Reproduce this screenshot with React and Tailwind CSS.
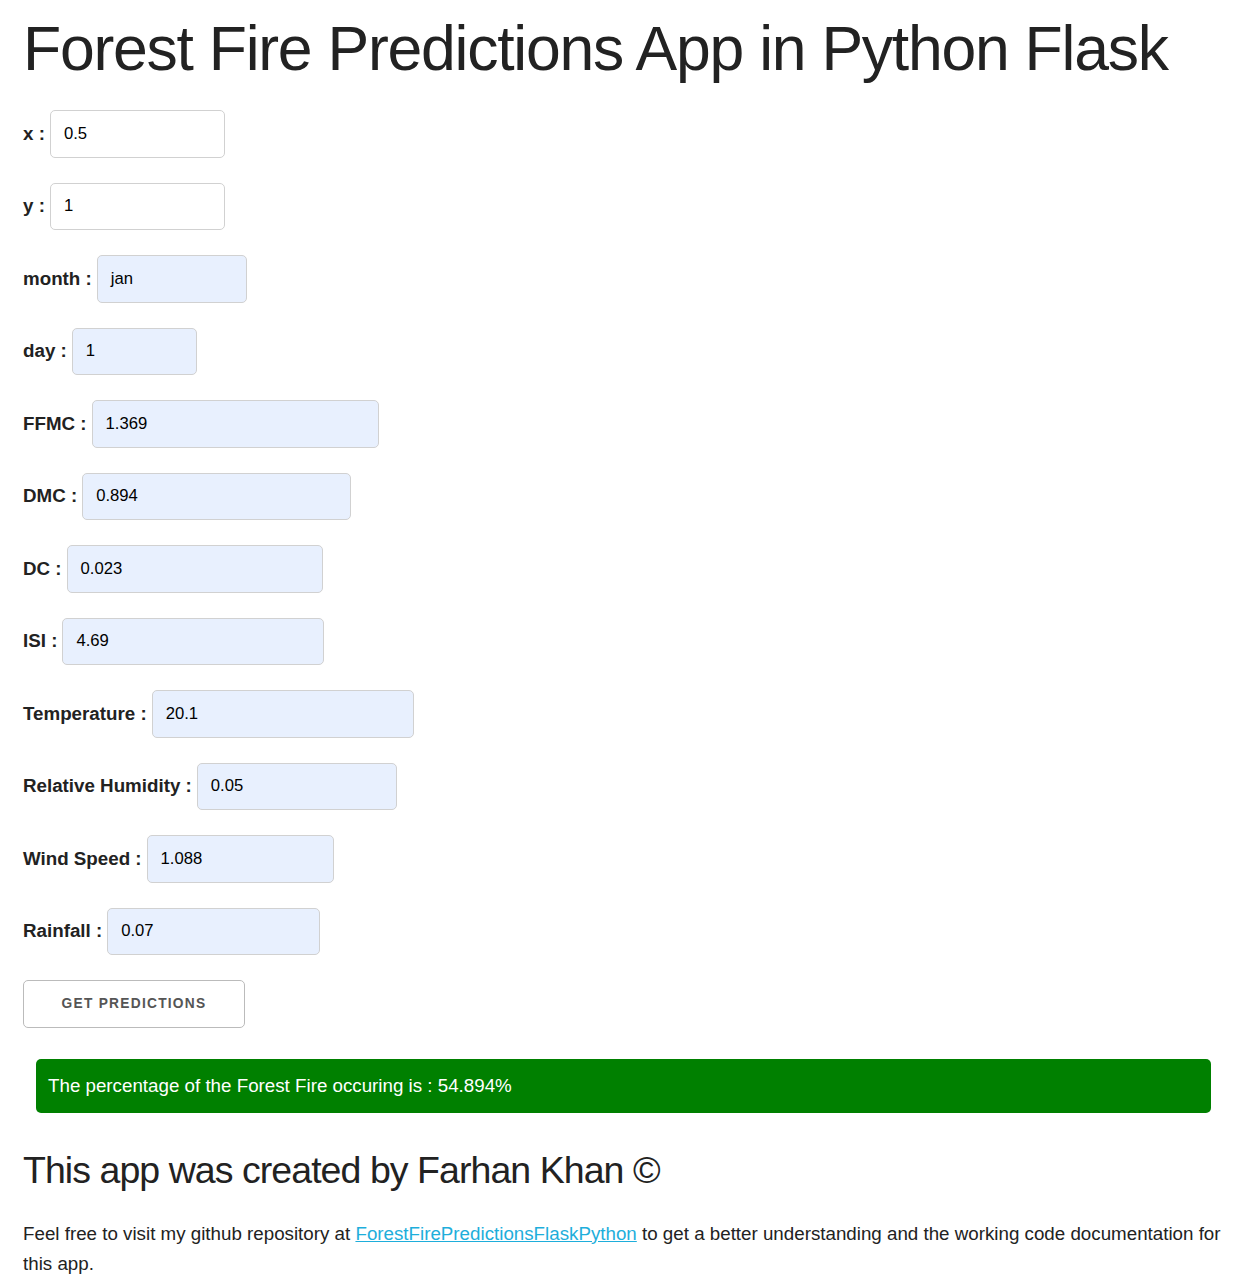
export default function App() {
  const rows = [
    { label: "x", value: "0.5", w: "w-[175px]", auto: false },
    { label: "y", value: "1", w: "w-[175px]", auto: false },
    { label: "month", value: "jan", w: "w-[150px]", auto: true },
    { label: "day", value: "1", w: "w-[125px]", auto: true },
    { label: "FFMC", value: "1.369", w: "w-[287px]", auto: true },
    { label: "DMC", value: "0.894", w: "w-[269px]", auto: true },
    { label: "DC", value: "0.023", w: "w-[256px]", auto: true },
    { label: "ISI", value: "4.69", w: "w-[262px]", auto: true },
    { label: "Temperature", value: "20.1", w: "w-[262px]", auto: true },
    { label: "Relative Humidity", value: "0.05", w: "w-[200px]", auto: true },
    { label: "Wind Speed", value: "1.088", w: "w-[187px]", auto: true },
    { label: "Rainfall", value: "0.07", w: "w-[213px]", auto: true },
  ];
  return (
    <div className="min-h-[1288px] bg-white text-[#222] font-['Liberation_Sans',Arial,sans-serif] text-[18.75px] leading-[30px] px-[23px]">
      <h1 className="pt-[11px] text-[62.5px] leading-[75px] tracking-[-1.25px] mb-[24px] whitespace-nowrap">
        Forest Fire Predictions App in Python Flask
      </h1>
      <div className="flex flex-col gap-[25px]">
        {rows.map((r) => (
          <div key={r.label} className="flex items-center h-[47.5px] gap-[5px]">
            <label className="font-bold whitespace-nowrap">{r.label} :</label>
            <div
              className={`${r.w} h-[47.5px] border border-[#D1D1D1] rounded-[5px] px-[13px] flex items-center text-[16.67px] text-black ${
                r.auto ? "bg-[#E8F0FE]" : "bg-white"
              }`}
            >
              {r.value}
            </div>
          </div>
        ))}
        <div>
          <button className="h-[47.5px] w-[222px] border border-[#bbb] rounded-[5px] text-[#555] text-[13.75px] font-bold tracking-[1.25px] uppercase bg-transparent">
            Get Predictions
          </button>
        </div>
      </div>
      <div className="mt-[31.5px] ml-[13px] mr-[-1px] h-[54px] bg-[#008000] rounded-[5px] flex items-center px-[12px] text-white">
        The percentage of the Forest Fire occuring is : 54.894%
      </div>
      <h3 className="mt-[33px] text-[37.5px] leading-[48.75px] tracking-[-0.95px] mb-[24px] whitespace-nowrap">
        This app was created by Farhan Khan ©
      </h3>
      <p className="mr-[-14px]">
        Feel free to visit my github repository at{" "}
        <a href="#" className="text-[#1EAEDB] underline">
          ForestFirePredictionsFlaskPython
        </a>{" "}
        to get a better understanding and the working code documentation for this app.
      </p>
    </div>
  );
}
